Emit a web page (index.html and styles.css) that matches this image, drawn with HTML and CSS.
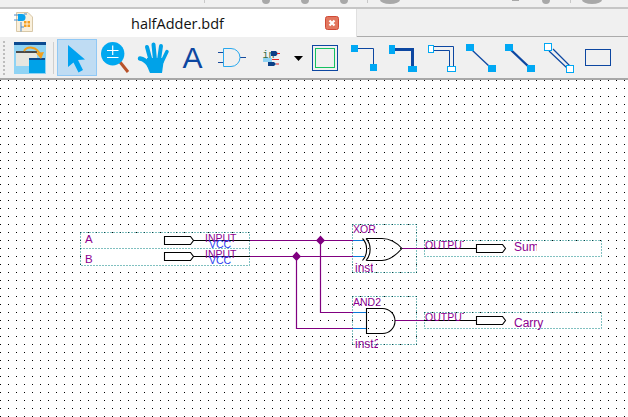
FILE: index.html
```html
<!DOCTYPE html>
<html lang="en">
<head>
<meta charset="utf-8">
<title>halfAdder.bdf</title>
<link rel="stylesheet" href="styles.css">
</head>
<body>
<div class="app">
  <div class="topstrip">
    <svg width="628" height="7" viewBox="0 0 628 7">
      <g fill="#a8a8a8">
        <circle cx="266" cy="0" r="4"/><circle cx="305" cy="0" r="4"/><circle cx="344" cy="0" r="4"/>
        <ellipse cx="390" cy="0" rx="10" ry="4"/><rect x="512" y="0" width="7" height="1"/>
        <circle cx="546" cy="0" r="4"/><ellipse cx="592" cy="0" rx="10" ry="4"/>
      </g>
      <g fill="#c8c8c8"><rect x="204" y="0" width="1" height="3"/><rect x="367" y="0" width="1" height="3"/><rect x="570" y="0" width="1" height="3"/></g>
    </svg>
  </div>
  <div class="tabs">
    <div class="tab">
      <svg class="fileicon" width="20" height="22" viewBox="14 11 20 22">
        <path d="M16.5 12.5H28L32.5 17V31.5H16.5Z" fill="#faf0dc" stroke="#d8c8a8"/>
        <path d="M14 15H20M14 20H20M21 22V31.5M21 27H24" stroke="#4d8ac8" fill="none"/>
        <path d="M18 14H22A3.5 3.5 0 0 1 22 21H18Z" fill="#0ba3ee"/>
        <path d="M24 14H27" stroke="#4d8ac8"/>
        <rect x="24" y="21" width="6" height="6" fill="#f4a020"/>
        <path d="M27 21V27M24 24H30" stroke="#fff" stroke-width=".8"/>
      </svg>
      <span class="tabtitle">halfAdder.bdf</span>
      <svg class="closeicon" width="14" height="14" viewBox="0 0 14 14">
        <rect x=".5" y=".5" width="13" height="13" rx="2" fill="#e2775f" stroke="#cf4a36"/>
        <path d="M4.5 4.5L9.5 9.5M9.5 4.5L4.5 9.5" stroke="#fff" stroke-width="2.2"/>
      </svg>
    </div>
    <div class="tabrest"></div>
  </div>
  <div class="toolbar">
    <svg class="t-grip" width="3" height="41" viewBox="3 37 3 41">
      <g fill="#bdbdbd"><rect x="3" y="41" width="2" height="2"/><rect x="3" y="45" width="2" height="2"/><rect x="3" y="49" width="2" height="2"/><rect x="3" y="53" width="2" height="2"/><rect x="3" y="57" width="2" height="2"/><rect x="3" y="61" width="2" height="2"/><rect x="3" y="65" width="2" height="2"/><rect x="3" y="69" width="2" height="2"/><rect x="3" y="73" width="2" height="2"/></g>
    </svg>
    <svg class="t-window" width="32" height="41" viewBox="14 37 32 41">
      <rect x="14" y="42" width="32" height="32" fill="#8fd3f4"/>
      <rect x="14" y="42" width="32" height="3" fill="#0b4a90"/>
      <rect x="16" y="51" width="21" height="15" fill="#e6e6e0"/>
      <rect x="16" y="51" width="21" height="2" fill="#4a4a4a"/>
      <rect x="29" y="58" width="16" height="15" fill="#00a2e8"/>
      <rect x="29" y="58" width="16" height="2" fill="#0b4a90"/>
      <path d="M24 51C27 46 37 46 40 55" fill="none" stroke="#f0a020" stroke-width="2"/>
      <path d="M36 53L44 52L41 59Z" fill="#f0a020"/>
    </svg>
    <div class="t-sep"></div>
    <div class="t-selected">
      <svg width="38" height="35" viewBox="58 40 38 35">
        <path d="M68 45L85 59.5L78 60L83 70L78.500 72.500L73.500 62.500L68 67Z" fill="#00a2f0"/>
      </svg>
    </div>
    <svg class="t-zoom" width="32" height="41" viewBox="99 37 32 41">
      <path d="M120 62L128 72" stroke="#b8522a" stroke-width="3"/>
      <circle cx="112.700" cy="53.700" r="11.700" fill="#00a8f0"/>
      <path d="M107 50.500H118.500M112.700 45.500V55M107 57.500H118.500" stroke="#fff" stroke-width="1.200" fill="none"/>
    </svg>
    <svg class="t-hand" width="33" height="41" viewBox="137 37 33 41">
      <g fill="none" stroke="#00a2e8" stroke-linecap="round">
        <path d="M140 58.500C144 59 147 62 149 65" stroke-width="4.500"/>
        <path d="M147 47L150.500 60" stroke-width="4"/>
        <path d="M153.500 44.500L155 60" stroke-width="4"/>
        <path d="M161 46L159 60" stroke-width="4"/>
        <path d="M167 51.500L162 62" stroke-width="3.500"/>
      </g>
      <path d="M147 58H164L163 66L162 73H150L147 66Z" fill="#00a2e8"/>
    </svg>
    <svg class="t-a" width="22" height="41" viewBox="182 37 22 41">
      <text x="182.500" y="68" class="a-glyph">A</text>
    </svg>
    <svg class="t-gate" width="30" height="41" viewBox="218 37 30 41">
      <path d="M218 52.500H223M218 62.500H223M240 57.500H246" stroke="#174a9c"/>
      <path d="M223.500 48.500H231A9 9 0 0 1 231 66.500H223.500Z" fill="none" stroke="#28a8ee"/>
    </svg>
    <svg class="t-in" width="18" height="41" viewBox="262 37 18 41">
      <text x="262.500" y="58" class="in-glyph">in</text>
      <path d="M271 51H276L278 53.500L276 56H271Z" fill="#0b3f86"/>
      <rect x="263" y="58" width="9" height="4" fill="#8fd3f4"/>
      <path d="M277 53.500H280M272 59.500H279M276 64H279" stroke="#e02828"/>
      <path d="M268 62H274L276 64L274 66H268Z" fill="#0b3f86"/>
    </svg>
    <svg class="t-drop" width="10" height="41" viewBox="294 37 10 41">
      <path d="M294 56H303L298.500 61Z" fill="#000"/>
    </svg>
    <svg class="t-rect" width="26" height="41" viewBox="312 37 26 41">
      <rect x="312.500" y="45.500" width="25" height="25" fill="none" stroke="#0d47a1"/>
      <rect x="315.500" y="48.500" width="19" height="19" fill="none" stroke="#14c060"/>
    </svg>
    <svg class="t-w1" width="26" height="41" viewBox="351 37 26 41">
      <path d="M355 48.500H373.500V68" fill="none" stroke="#0d47a1"/>
      <rect x="351" y="45" width="7" height="7" fill="#00a8f4"/>
      <rect x="370" y="64" width="7" height="7" fill="#00a8f4"/>
    </svg>
    <svg class="t-w2" width="28" height="41" viewBox="389 37 28 41">
      <path d="M392 49.500H412.500V69" fill="none" stroke="#0d47a1" stroke-width="3"/>
      <rect x="389" y="45" width="6" height="9" fill="#00a8f4"/>
      <rect x="408" y="66" width="9" height="6" fill="#00a8f4"/>
    </svg>
    <svg class="t-w3" width="28" height="41" viewBox="428 37 28 41">
      <path d="M433 46.500H453.500V66M433 50.500H449.500V66" fill="none" stroke="#0d47a1"/>
      <rect x="428.500" y="45.500" width="5" height="7" fill="#fff" stroke="#00a8f4"/>
      <rect x="447.500" y="66.500" width="8" height="5" fill="#fff" stroke="#00a8f4"/>
    </svg>
    <svg class="t-d1" width="30" height="41" viewBox="466 37 30 41">
      <path d="M472 50L490 67" stroke="#0d47a1" stroke-width="1.300"/>
      <rect x="466" y="44" width="8" height="7" fill="#00a8f4"/>
      <rect x="488" y="65" width="8" height="7" fill="#00a8f4"/>
    </svg>
    <svg class="t-d2" width="30" height="41" viewBox="505 37 30 41">
      <path d="M511 50L529 67" stroke="#0d47a1" stroke-width="2.400"/>
      <rect x="505" y="44" width="8" height="7" fill="#00a8f4"/>
      <rect x="527" y="65" width="8" height="7" fill="#00a8f4"/>
    </svg>
    <svg class="t-d3" width="30" height="41" viewBox="544 37 30 41">
      <path d="M549 51L567 68M553 49L570 66" stroke="#0d47a1" stroke-width="1.200"/>
      <rect x="544.500" y="43.500" width="7" height="7" fill="#fff" stroke="#00a8f4"/>
      <rect x="566.500" y="65.500" width="7" height="7" fill="#fff" stroke="#00a8f4"/>
    </svg>
    <svg class="t-r2" width="27" height="41" viewBox="585 37 27 41">
      <rect x="585.500" y="49.500" width="25" height="16" fill="none" stroke="#0d47a1"/>
    </svg>
  </div>
  <svg class="canvas" width="628" height="337" viewBox="0 80 628 337">
    <defs>
      <pattern id="dots" x="0" y="0" width="8" height="8" patternUnits="userSpaceOnUse">
        <rect x="0" y="0" width="1" height="1" fill="#000"/>
      </pattern>
      <clipPath id="clip-out1"><rect x="424" y="240" width="40" height="10"/></clipPath>
      <clipPath id="clip-out2"><rect x="424" y="312" width="40" height="10"/></clipPath>
      <clipPath id="clip-sum"><rect x="514" y="240" width="23" height="17"/></clipPath>
      <clipPath id="clip-inst"><rect x="354" y="262" width="19" height="12"/></clipPath>
      <clipPath id="clip-inst2"><rect x="354" y="336" width="24" height="14"/></clipPath>
    </defs>
    <rect x="0" y="80" width="628" height="337" fill="url(#dots)"/>

    <g class="pinbox">
      <rect x="81" y="233" width="168" height="16" fill="#fff"/>
      <rect x="81" y="249" width="168" height="16" fill="#fff"/>
      <rect x="424" y="241" width="178" height="16" fill="#fff"/>
      <rect x="424" y="313" width="178" height="16" fill="#fff"/>
    </g>
    <path class="dotted" d="M80.500 232.500H249.500V265.500H80.500ZM80.500 248.500H249.500M352.500 224.500H416.500V272.500H352.500ZM352.500 296.500H416.500V344.500H352.500ZM424.500 240.500H601.500V256.500H424.500ZM424.500 312.500H601.500V328.500H424.500Z"/>

    <path class="wire-black" d="M193 240.500H250M193 256.500H250M424 248.500H476M424 320.500H476"/>
    <path class="wire" d="M250 240.500H353M250 256.500H353M296.500 256V328.500H353M320.500 240V312.500H353M402 248.500H424M395 320.500H424"/>
    <path class="wire-blue" d="M353 240.500H364M353 256.500H364M353 312.500H366M353 328.500H366"/>
    <path d="M320.500 235.500L325 240.500L320.500 245L316 240.500ZM296.500 251.500L301 256.500L296.500 261L292 256.500Z" fill="#800080"/>

    <path class="sym" d="M164.500 236.500H190.500L193.500 240.500L190.500 244.500H164.500ZM164.500 252.500H190.500L193.500 256.500L190.500 260.500H164.500ZM476.500 244.500H502.500L505.500 248.500L502.500 252.500H476.500ZM476.500 316.500H502.500L505.500 320.500L502.500 324.500H476.500Z"/>
    <path class="sym" d="M366 238.500C371.500 244 371.500 254.500 366 260.500M362.500 238.500C368 244 368 254.500 362.500 260.500M366.500 238.500H382C390 238.500 397 243 402 248.500C397 254 390 260.500 382 260.500H366.500"/>
    <path class="sym" d="M366.500 308.500H382.500A12.500 12.500 0 0 1 382.500 333.500H366.500Z"/>

    <text x="85" y="243" class="lbl">A</text>
    <text x="85" y="263" class="lbl">B</text>
    <text x="205" y="242" class="lbl small">INPUT</text>
    <text x="209" y="248" class="vcc">VCC</text>
    <text x="205" y="258" class="lbl small">INPUT</text>
    <text x="209" y="264" class="vcc">VCC</text>
    <text x="353" y="233" class="lbl small">XOR</text>
    <text x="355" y="272" class="lbl big" clip-path="url(#clip-inst)">inst</text>
    <text x="353" y="305.500" class="lbl small">AND2</text>
    <text x="355" y="347.500" class="lbl big" clip-path="url(#clip-inst2)">inst2</text>
    <text x="425" y="249" class="lbl small" clip-path="url(#clip-out1)">OUTPUT</text>
    <text x="425" y="321" class="lbl small" clip-path="url(#clip-out2)">OUTPUT</text>
    <text x="514" y="251" class="lbl big" clip-path="url(#clip-sum)">Sum</text>
    <text x="514" y="327" class="lbl big">Carry</text>
  </svg>
</div>
</body>
</html>
```
FILE: styles.css
```css
* { box-sizing: border-box; }
html, body { margin: 0; padding: 0; background: #fff; }
svg { display: block; flex: none; }

.app { width: 628px; height: 417px; display: flex; flex-direction: column; overflow: hidden; }

.topstrip { height: 9px; background: #f0f0f0; border-bottom: 2px solid #c6c6c6; }

.tabs { height: 28px; display: flex; }
.tab { width: 357px; background: #fff; border-right: 1px solid #e0e0e0; display: flex; align-items: center; }
.fileicon { margin-left: 14px; margin-top: -3px; }
.tabtitle { margin-left: 97px; width: 94px; font: 14.500px "Open Sans", "Liberation Sans", sans-serif; color: #111; white-space: nowrap; }
.closeicon { margin-left: 100px; }
.tabrest { flex: 1; background: #f0f0f0; border-bottom: 1px solid #ababab; }

.toolbar { height: 43px; background: #f0f0f0; border-bottom: 2px solid #a8a8a8; display: flex; align-items: flex-start; flex: none; }
.t-grip { margin-left: 3px; }
.t-window { margin-left: 8px; }
.t-sep { margin: 5px 0 0 7px; width: 1px; height: 32px; background: #cfcfcf; }
.t-selected { margin: 2px 0 0 3px; width: 40px; height: 37px; background: #bfdcf3; border: 1px solid #90c8f5; }
.t-zoom { margin-left: 2px; }
.t-hand { margin-left: 6px; }
.t-a { margin-left: 12px; }
.t-gate { margin-left: 14px; }
.t-in { margin-left: 14px; }
.t-drop { margin-left: 14px; }
.t-rect { margin-left: 8px; }
.t-w1 { margin-left: 13px; }
.t-w2 { margin-left: 12px; }
.t-w3 { margin-left: 11px; }
.t-d1 { margin-left: 10px; }
.t-d2 { margin-left: 9px; }
.t-d3 { margin-left: 9px; }
.t-r2 { margin-left: 11px; }

.a-glyph { font: 30px "Liberation Sans", sans-serif; fill: #0d47a1; }
.in-glyph { font: 10px "Liberation Mono", monospace; fill: #2e6b3e; }

.canvas { background: #fff; }

.dotted { fill: none; stroke: #008080; stroke-width: 1; stroke-dasharray: 1 2; }
.wire { fill: none; stroke: #800080; stroke-width: 1.200; }
.wire-black { fill: none; stroke: #000; stroke-width: 1; }
.wire-blue { fill: none; stroke: #0a78d8; stroke-width: 1.200; }
.sym { fill: none; stroke: #000; stroke-width: 1.100; }
.lbl { font: 11.500px "Liberation Sans", sans-serif; fill: #8c0090; }
.lbl.small { font-size: 10.500px; }
.lbl.big { font-size: 12px; }
.vcc { font: 10.500px "Liberation Sans", sans-serif; fill: #2a40f0; }
```
